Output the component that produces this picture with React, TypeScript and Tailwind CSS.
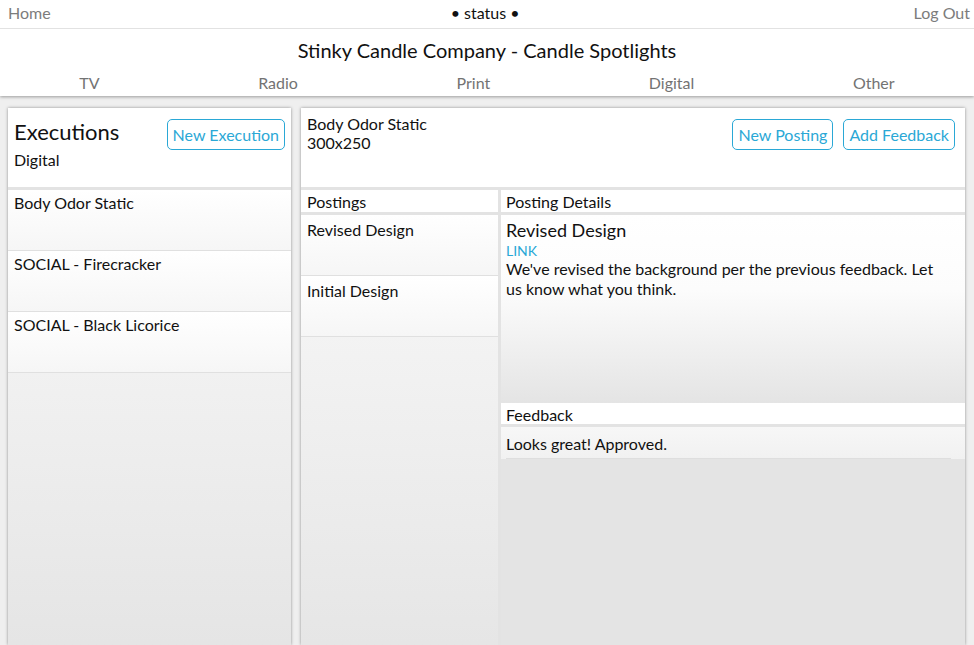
import React from 'react';

const font = { fontFamily: 'Lato, "Open Sans", sans-serif' };

const navItems = ['TV', 'Radio', 'Print', 'Digital', 'Other'];
const executions = ['Body Odor Static', 'SOCIAL - Firecracker', 'SOCIAL - Black Licorice'];
const postings = ['Revised Design', 'Initial Design'];

const OutlineButton: React.FC<{ label: string }> = ({ label }) => (
    <button className="h-[31px] px-[5px] rounded-[5px] border border-[#2aa8d6] text-[#2aa8d6] text-[16px] leading-none bg-white">
        {label}
    </button>
);

const App: React.FC = () => {
    return (
        <div className="h-screen flex flex-col bg-[#efefef] text-[#111] overflow-hidden font-['Lato',sans-serif]" style={font}>
            {/* 상단 헤더 */}
            <header className="bg-white shadow-[0_1px_3px_rgba(0,0,0,0.35)] relative z-10">
                <div className="h-[29px] flex items-center justify-between pl-[8px] pr-[4px] pb-[2px] border-b border-[#e2e2e2] text-[16px]">
                    <span className="text-[#7c7c7c]">Home</span>
                    <span className="text-[#111] pl-[6px]">• status •</span>
                    <span className="text-[#7c7c7c]">Log Out</span>
                </div>
                <div className="h-[40px] flex items-center justify-center text-[20px] pt-[1px]">
                    Stinky Candle Company - Candle Spotlights
                </div>
                <nav className="h-[27px] flex justify-around items-center text-[16px] text-[#737373]">
                    {navItems.map((n) => (
                        <span key={n}>{n}</span>
                    ))}
                </nav>
            </header>

            {/* 본문 */}
            <main className="flex-1 flex gap-[10px] pl-[8px] pr-[9px] pt-[12px] min-h-0">
                {/* 실행 목록 */}
                <section className="w-[283px] flex flex-col bg-white shadow-[0_0_3px_rgba(0,0,0,0.4)]">
                    <div className="h-[82px] shrink-0 flex justify-between px-[6px] pt-[11px] border-b-[3px] border-[#e3e3e3]">
                        <div>
                            <div className="text-[22px] leading-[26px]">Executions</div>
                            <div className="text-[16px] mt-[3px]">Digital</div>
                        </div>
                        <OutlineButton label="New Execution" />
                    </div>
                    <div className="flex-1 bg-gradient-to-b from-[#f9f9f9] to-[#e5e5e5]">
                        {executions.map((e) => (
                            <div key={e} className="h-[61px] px-[6px] pt-[1px] text-[16px] border-b border-[#e0e0e0] bg-gradient-to-b from-white to-[#f6f6f6]">
                                {e}
                            </div>
                        ))}
                    </div>
                </section>

                {/* 상세 영역 */}
                <section className="flex-1 flex flex-col bg-white shadow-[0_0_3px_rgba(0,0,0,0.4)] min-w-0">
                    <div className="h-[82px] shrink-0 flex justify-between px-[6px] pt-[11px] border-b-[3px] border-[#e3e3e3]">
                        <div className="text-[16px] leading-[19px] mt-[-5px]">
                            <div>Body Odor Static</div>
                            <div>300x250</div>
                        </div>
                        <div className="flex gap-[10px] pr-[4px]">
                            <OutlineButton label="New Posting" />
                            <OutlineButton label="Add Feedback" />
                        </div>
                    </div>
                    <div className="flex-1 flex min-h-0">
                        {/* 포스팅 목록 */}
                        <div className="w-[200px] shrink-0 flex flex-col border-r-[3px] border-[#e3e3e3] bg-gradient-to-b from-[#f9f9f9] to-[#e6e6e6]">
                            <div className="h-[25px] px-[6px] text-[16px] bg-white border-b-[3px] border-[#e3e3e3]">Postings</div>
                            {postings.map((p) => (
                                <div key={p} className="h-[61px] px-[6px] pt-[3px] text-[16px] border-b border-[#e0e0e0] bg-gradient-to-b from-white to-[#f6f6f6]">
                                    {p}
                                </div>
                            ))}
                        </div>
                        {/* 포스팅 상세 */}
                        <div className="flex-1 flex flex-col bg-[#e4e4e4] min-w-0">
                            <div className="h-[25px] px-[5px] text-[16px] bg-white border-b-[3px] border-[#e3e3e3]">Posting Details</div>
                            <div className="h-[188px] px-[5px] pt-[3px] bg-[linear-gradient(to_bottom,#ffffff_0%,#fcfcfc_40%,#e4e4e4_100%)]">
                                <div className="text-[18px] leading-[24px]">Revised Design</div>
                                <div className="text-[14px] leading-[17px] text-[#2aa8d6]">LINK</div>
                                <div className="text-[16px] leading-[20px] pr-[20px]">
                                    We've revised the background per the previous feedback. Let us know what you think.
                                </div>
                            </div>
                            <div className="h-[24px] px-[5px] text-[16px] bg-white border-b-[3px] border-[#e3e3e3]">Feedback</div>
                            <div className="pl-[5px] pr-[14px] bg-gradient-to-b from-[#f7f7f7] to-[#f1f1f1]">
                                <div className="h-[32px] pt-[5px] text-[16px] border-b border-[#dedede]">Looks great! Approved.</div>
                            </div>
                        </div>
                    </div>
                </section>
            </main>
        </div>
    );
};

export default App;
